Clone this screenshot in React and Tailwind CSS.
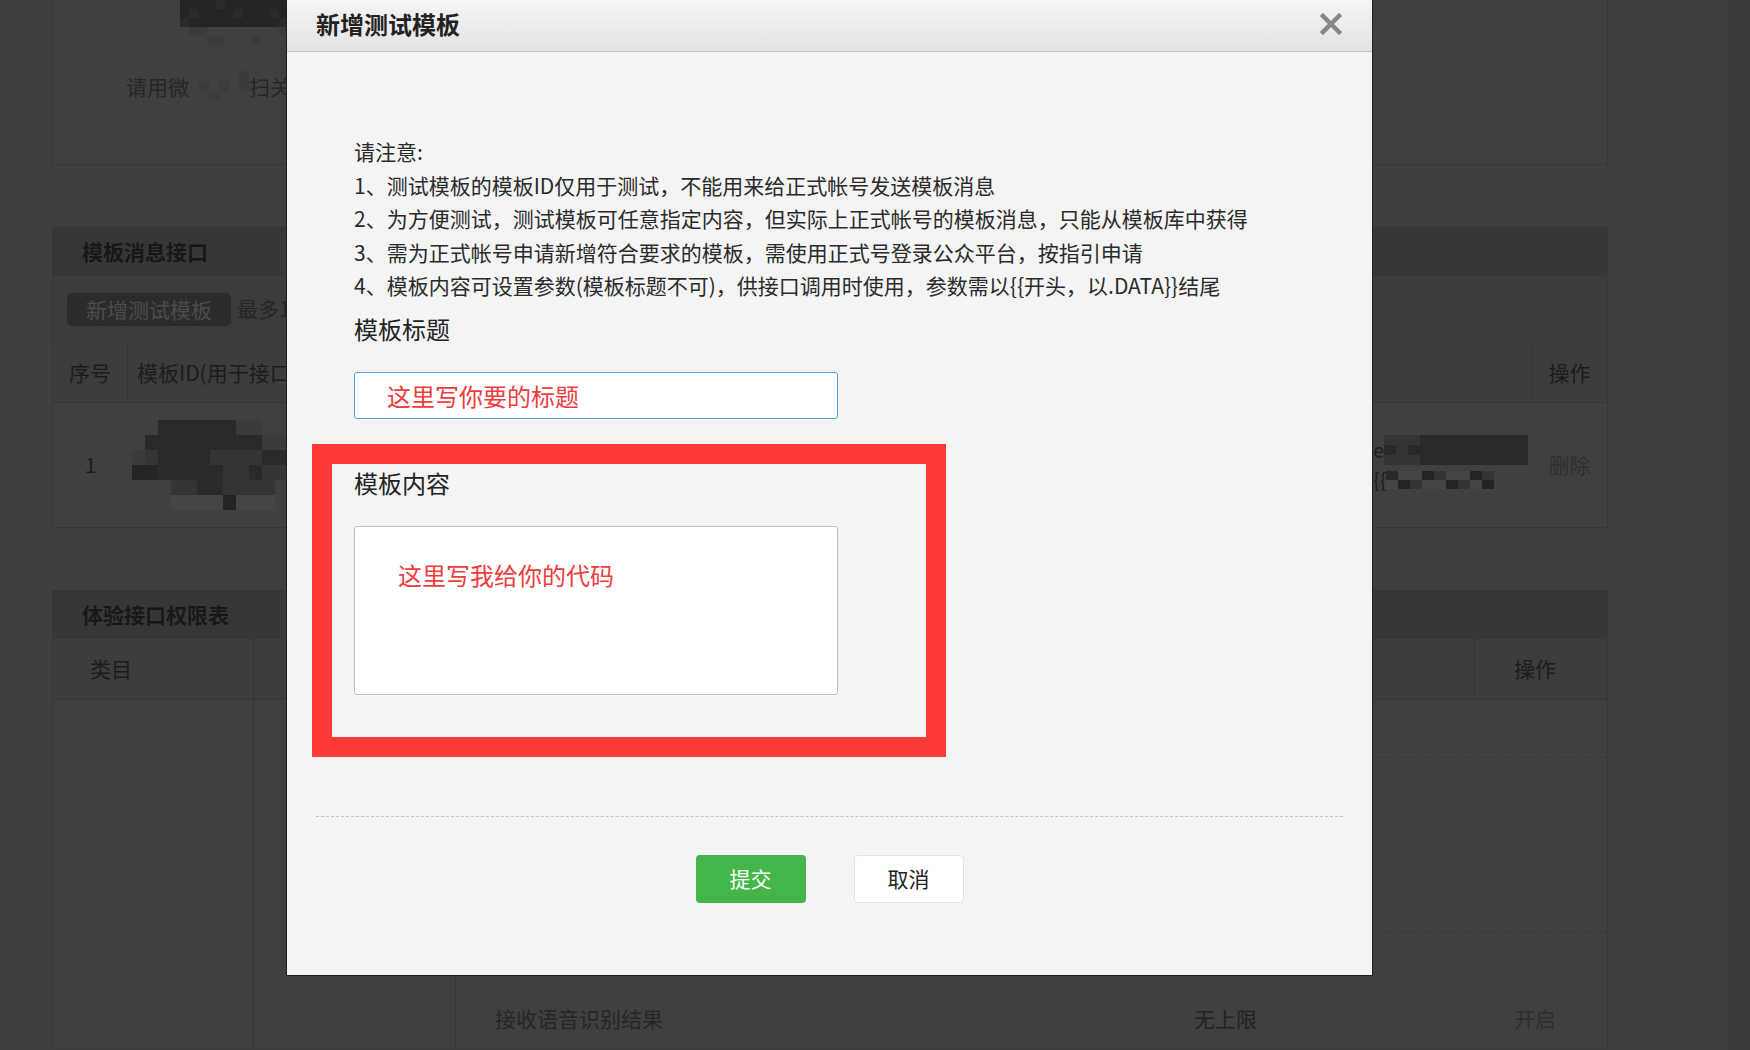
import React from 'react'

// tones used for the pixelated (censored) areas of the dimmed page
const tones = ['bg-[#2a2a2a]', 'bg-[#353535]', 'bg-[#454545]', 'bg-[#3b3b3b]', 'bg-[#242424]', 'bg-[#4b4b4b]', 'bg-[#404040]']

const Mosaic = ({ pattern, cell = 'w-[12px] h-[12px]' }) => (
  <div className="flex flex-col">
    {pattern.map((row, i) => (
      <div key={i} className="flex">
        {row.split('').map((c, j) => (
          <div key={j} className={`${cell} ${tones[Number(c)]}`} />
        ))}
      </div>
    ))}
  </div>
)

const CloseIcon = () => (
  <svg width="22" height="22" viewBox="0 0 22 22" className="shrink-0">
    <path d="M3 3 L19 19 M19 3 L3 19" stroke="#8b8686" strokeWidth="4.5" strokeLinecap="square" />
  </svg>
)

const TopCard = () => (
  <div className="flex h-[165px] flex-col border-x border-b border-[#373737] bg-[#404040]">
    <div className="ml-[127px] flex h-[45px] w-[107px]">
      <Mosaic
        cell="w-[9px] h-[9px]"
        pattern={['444404444444', '404444044404', '044444444440', '633666666663', '666336663666']}
      />
    </div>
    <div className="mt-[26px] flex items-center pl-[73px] text-[21px] leading-[30px] text-[#262626]">
      <span>请用微</span>
      <Mosaic cell="w-[10px] h-[10px]" pattern={['666663', '636363', '663666']} />
      <span>扫关注</span>
    </div>
  </div>
)

const TemplateSection = () => (
  <section className="mt-[62px] border border-[#373737] bg-[#404040]">
    <div className="flex h-[48px] items-center border-b border-[#363636] bg-[#373737] pl-[29px] text-[21px] font-bold text-[#171717]">
      模板消息接口
    </div>
    <div className="flex h-[67px] items-center gap-[6px] border-b border-[#383838] bg-[#3c3c3c] pl-[14px] text-[21px]">
      <button className="h-[33px] w-[164px] rounded-[5px] bg-[#2c2c2c] text-[21px] leading-[33px] text-[#4c4c4c]">
        新增测试模板
      </button>
      <span className="text-[#262626]">最多10个</span>
    </div>
    <div className="flex h-[60px] border-b border-[#363636] bg-[#3d3d3d] text-[21px] text-[#1c1c1c]">
      <div className="flex w-[75px] items-center justify-center border-r border-[#363636]">序号</div>
      <div className="flex w-[300px] items-center border-r border-[#383838] pl-[9px]">模板ID(用于接口调用)</div>
      <div className="flex w-[300px] items-center justify-center border-r border-[#383838]">模板标题</div>
      <div className="flex flex-1 items-center justify-center border-r border-[#363636]">模板内容</div>
      <div className="flex w-[75px] items-center justify-center">操作</div>
    </div>
    <div className="flex h-[124px] text-[21px]">
      <div className="flex w-[75px] items-center justify-center text-[#1c1c1c]">1</div>
      <div className="flex w-[300px] items-center pl-[4px]">
        <Mosaic
          pattern={['66000000336666', '60000000003366', '31000011110000', '44000001101122', '66611001111666', '66622224222666']}
          cell="w-[13px] h-[15px]"
        />
      </div>
      <div className="w-[300px]" />
      <div className="flex flex-1 items-center justify-end pr-[4px]">
        <div className="flex flex-col text-[20px] leading-[30px] text-[#1f1f1f]">
          <div className="flex items-center">
            <span>e</span>
            <Mosaic cell="w-[12px] h-[10px]" pattern={['111000000000', '010000000000', '111000000000']} />
          </div>
          <div className="flex items-center">
            <span>{'{{'}</span>
            <Mosaic cell="w-[12px] h-[9px]" pattern={['022412241', '241224124']} />
          </div>
        </div>
      </div>
      <div className="flex w-[75px] items-center justify-center text-[#2f2f2f]">删除</div>
    </div>
  </section>
)

const PermRow = ({ line = 'border-[#3c3c3c]', children }) => (
  <div className={`flex h-[58px] items-center border-b border-dashed ${line}`}>{children}</div>
)

const PermSection = () => (
  <section className="mt-[62px] border border-[#373737] bg-[#404040]">
    <div className="flex h-[48px] items-center border-b border-[#363636] bg-[#373737] pl-[29px] text-[21px] font-bold text-[#171717]">
      体验接口权限表
    </div>
    <div className="flex h-[61px] border-b border-[#363636] bg-[#3d3d3d] text-[21px] text-[#1c1c1c]">
      <div className="flex w-[201px] items-center border-r border-[#363636] pl-[37px]">类目</div>
      <div className="flex w-[202px] items-center border-r border-[#383838] pl-[37px]">功能</div>
      <div className="flex flex-1 items-center border-r border-[#383838] pl-[40px]">接口</div>
      <div className="flex w-[375px] items-center border-r border-[#363636] pl-[94px]">每日调用上限/次</div>
      <div className="flex w-[132px] items-center pl-[39px]">操作</div>
    </div>
    <div className="flex text-[21px]">
      <div className="w-[201px] border-r border-[#363636]" />
      <div className="w-[202px] border-r border-[#363636]" />
      <div className="flex flex-1 flex-col">
        <PermRow line="border-[#373737]" />
        <PermRow />
        <PermRow />
        <PermRow line="border-[#373737]" />
        <PermRow />
        <PermRow>
          <div className="flex-1 pl-[39px] text-[#262626]">接收语音识别结果</div>
          <div className="w-[375px] pl-[94px] text-[#222]">无上限</div>
          <div className="w-[132px] pl-[39px] text-[#2e2e2e]">开启</div>
        </PermRow>
      </div>
    </div>
  </section>
)

const Modal = () => (
  <div className="absolute left-[286px] top-0 h-[976px] w-[1087px] border-x border-b border-[#1f1f1f] bg-[#f4f4f4] text-[#262626]">
    <div className="flex h-[52px] items-center justify-between border-b border-[#c9bebe] bg-gradient-to-b from-[#f5f5f5] to-[#e3e3e3] pb-[4px] pl-[29px] pr-[30px]">
      <h3 className="text-[24px] font-bold text-[#222]">新增测试模板</h3>
      <CloseIcon />
    </div>

    <div className="px-[29px] pt-[83px]">
      <div className="pl-[38px]">
        <div className="text-[21px] leading-[33.5px] text-[#2a2a2a]">
          <p>请注意:</p>
          <p>1、测试模板的模板ID仅用于测试，不能用来给正式帐号发送模板消息</p>
          <p>2、为方便测试，测试模板可任意指定内容，但实际上正式帐号的模板消息，只能从模板库中获得</p>
          <p>3、需为正式帐号申请新增符合要求的模板，需使用正式号登录公众平台，按指引申请</p>
          <p>4、模板内容可设置参数(模板标题不可)，供接口调用时使用，参数需以{'{{'}开头，以.DATA{'}}'}结尾</p>
        </div>

        <label className="mt-[9px] block text-[24px] leading-[33px] text-[#222]">模板标题</label>
        <input
          readOnly
          value="这里写你要的标题"
          className="mt-[27px] block h-[47px] w-[484px] rounded-[3px] border border-[#5a9de0] bg-white pl-[32px] text-[24px] text-[#f03c3c] outline-none"
        />

        <label className="mt-[47px] block text-[24px] leading-[33px] text-[#222]">模板内容</label>
        <textarea
          readOnly
          value="这里写我给你的代码"
          className="mt-[27px] block h-[169px] w-[484px] resize-none rounded-[3px] border border-[#c8bdbd] bg-white pl-[43px] pt-[31px] text-[24px] leading-[33px] text-[#f03c3c] outline-none"
        />
      </div>

      <div className="mt-[121px] border-t border-dashed border-[#c9c0c0]" />

      <div className="mt-[38px] flex justify-center gap-[48px]">
        <button className="h-[48px] w-[110px] rounded-[4px] bg-[#44b549] text-[21px] text-white">提交</button>
        <button className="h-[48px] w-[110px] rounded-[4px] border border-[#e3e3e3] bg-white text-[21px] text-[#222]">
          取消
        </button>
      </div>
    </div>

    {/* red annotation frame drawn over the dialog */}
    <div className="pointer-events-none absolute left-[25px] top-[444px] h-[313px] w-[634px] border-[20px] border-[#fd3b3b]" />
  </div>
)

export default function App() {
  return (
    <div className="relative h-[1050px] w-full overflow-hidden bg-[#3f3f3f] font-['Noto_Sans_CJK_SC','Noto_Sans',sans-serif]">
      <div className="flex h-full">
        <main className="ml-[52px] w-[1556px] shrink-0">
          <TopCard />
          <TemplateSection />
          <PermSection />
        </main>
        <div className="flex-1" />
        <div className="w-[21px] border-l border-[#363636] bg-[#3a3a3a]" />
      </div>
      <Modal />
    </div>
  )
}
